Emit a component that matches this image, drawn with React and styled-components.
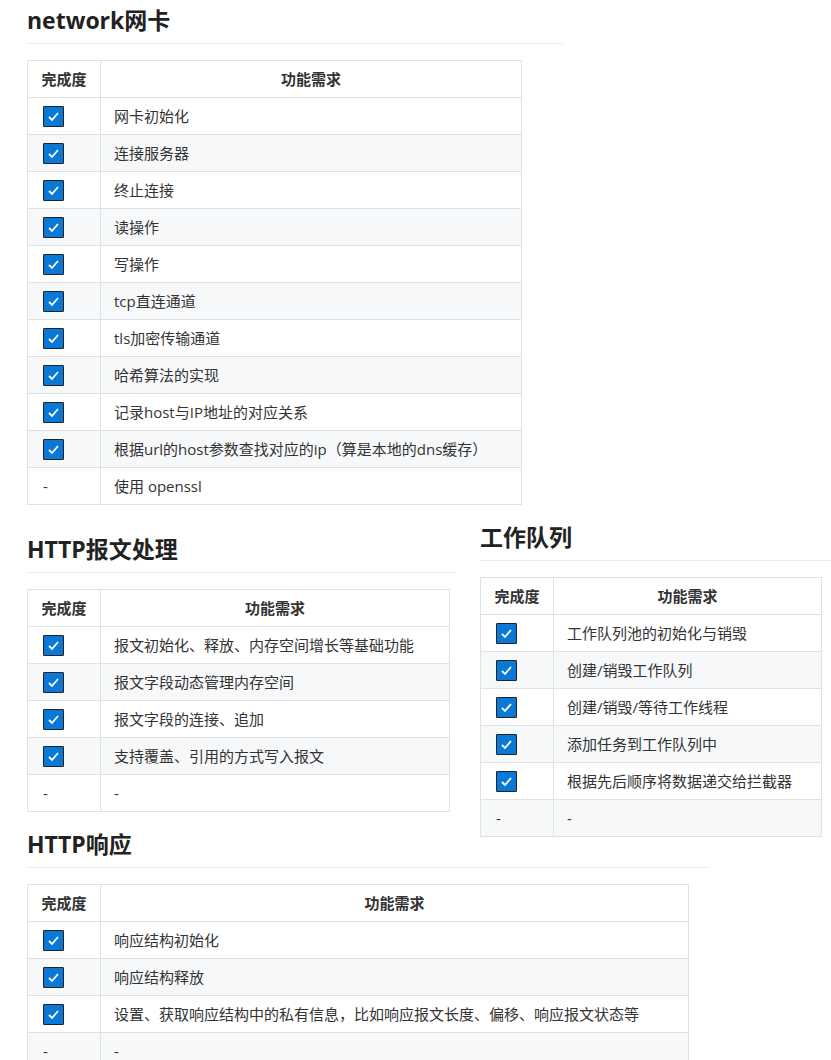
import React from "react";
import styled, { createGlobalStyle } from "styled-components";

const Global = createGlobalStyle`
  body { margin: 0; background: #fff; color: #333;
    font-family: "Open Sans", "Noto Sans CJK SC", sans-serif; font-size: 15px; }
`;
const Page = styled.div`padding: 0 0 0 27px; width: 804px;`;
const Section = styled.section`width: ${p => p.$w}px;`;
const Heading = styled.h2`
  margin: 0; padding: ${p => p.$top || 4}px 0 6px; font-size: 23px; font-weight: 700; line-height: 33px;
  color: #222; border-bottom: 1px solid #eaecef;
`;
const Table = styled.table`
  border-collapse: collapse; margin-top: 16px; width: ${p => p.$w}px;
  th, td { border: 1px solid #dfe2e5; height: 36px; padding: 0 13px; line-height: 20px; }
  th { font-weight: 700; text-align: center; }
  th:first-child { width: 48px; padding: 0 12px; }
  td:first-child { padding: 0 15px; }
  tbody tr:nth-child(even) { background: #f6f8fa; }
`;
const Row = styled.div`display: flex; align-items: flex-start; gap: 25px; margin-top: 24px;`;
const Col = styled.div`width: ${p => p.$w}px; flex-shrink: 0;`;
const Box = styled.span`
  display: inline-flex; width: 19px; height: 19px; background: #0a78d7; border: 1px solid #222;
  align-items: center; justify-content: center; vertical-align: middle; border-radius: 1px;
`;

const Check = () => (
  <Box><svg width="13" height="13" viewBox="0 0 13 13"><path d="M2 7 L5 10 L11 3" fill="none" stroke="#fff" strokeWidth="1.8" /></svg></Box>
);

const T = ({ w, rows }) => (
  <Table $w={w}>
    <thead><tr><th>完成度</th><th>功能需求</th></tr></thead>
    <tbody>
      {rows.map((r, i) => (
        <tr key={i}><td>{r[0] ? <Check /> : "-"}</td><td>{r[1]}</td></tr>
      ))}
    </tbody>
  </Table>
);

const c = s => [true, s];

export default function App() {
  return (
    <Page>
      <Global />
      <Section $w={536}>
        <Heading>network网卡</Heading>
        <T w={495} rows={[c("网卡初始化"), c("连接服务器"), c("终止连接"), c("读操作"), c("写操作"), c("tcp直连通道"), c("tls加密传输通道"), c("哈希算法的实现"), c("记录host与IP地址的对应关系"), c("根据url的host参数查找对应的ip（算是本地的dns缓存）"), [false, "使用 openssl"]]} />
      </Section>
      <Row>
        <Col $w={428}>
          <Heading>HTTP报文处理</Heading>
          <T w={423} rows={[c("报文初始化、释放、内存空间增长等基础功能"), c("报文字段动态管理内存空间"), c("报文字段的连接、追加"), c("支持覆盖、引用的方式写入报文"), [false, "-"]]} />
          <Section $w={682} style={{ marginTop: 12 }}>
            <Heading>HTTP响应</Heading>
            <T w={662} rows={[c("响应结构初始化"), c("响应结构释放"), c("设置、获取响应结构中的私有信息，比如响应报文长度、偏移、响应报文状态等"), [false, "-"]]} />
          </Section>
        </Col>
        <Col $w={351} style={{ marginTop: -12 }}>
          <Heading>工作队列</Heading>
          <T w={342} rows={[c("工作队列池的初始化与销毁"), c("创建/销毁工作队列"), c("创建/销毁/等待工作线程"), c("添加任务到工作队列中"), c("根据先后顺序将数据递交给拦截器"), [false, "-"]]} />
        </Col>
      </Row>
    </Page>
  );
}
